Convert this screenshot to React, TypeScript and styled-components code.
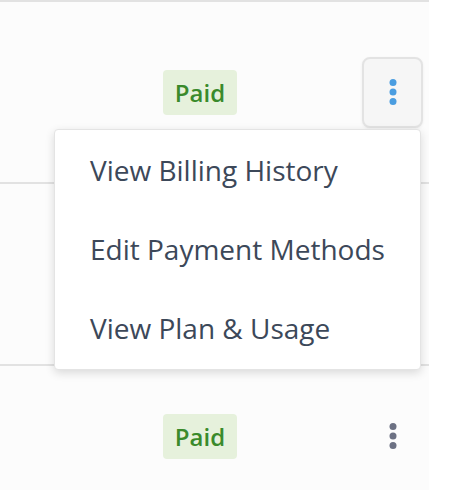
import React from "react";
import styled, { createGlobalStyle } from "styled-components";

const Global = createGlobalStyle`
  html, body { margin: 0; padding: 0; background: #ffffff; }
  body { font-family: "Open Sans", "Liberation Sans", sans-serif; }
`;

const Table = styled.div`
  width: 429px;
  height: 490px;
  background: #fcfcfc;
  border-top: 2px solid #e2e2e2;
  box-sizing: border-box;
  display: flex;
  flex-direction: column;
  overflow: hidden;
`;

const Row = styled.div<{ $height: number; $last?: boolean }>`
  position: relative;
  flex: 0 0 ${(p) => p.$height}px;
  display: flex;
  align-items: center;
  padding: 0 6px 0 163px;
  border-bottom: ${(p) => (p.$last ? "none" : "2px solid #e2e2e2")};
`;

const Badge = styled.span`
  display: inline-flex;
  align-items: center;
  justify-content: center;
  width: 74px;
  height: 45px;
  border-radius: 4px;
  background: #e6f1dc;
  color: #3a8a2b;
  font-size: 24px;
  font-weight: 600;
`;

const KebabButton = styled.button<{ $active?: boolean }>`
  margin-left: auto;
  width: 61px;
  height: 71px;
  display: flex;
  align-items: center;
  justify-content: center;
  border-radius: 8px;
  padding: 0;
  cursor: pointer;
  border: 2px solid ${(p) => (p.$active ? "#e3e3e3" : "transparent")};
  background: ${(p) => (p.$active ? "#f6f6f6" : "transparent")};
  box-shadow: ${(p) => (p.$active ? "0 1px 3px rgba(0,0,0,0.06)" : "none")};
  color: ${(p) => (p.$active ? "#4a9de0" : "#6c7183")};
`;

const Menu = styled.div`
  position: absolute;
  top: 127px;
  right: 8px;
  width: 367px;
  box-sizing: border-box;
  padding: 0 0 2px;
  background: #ffffff;
  border: 1px solid #e4e4e4;
  border-radius: 4px;
  box-shadow: 0 3px 10px rgba(0, 0, 0, 0.14);
  display: flex;
  flex-direction: column;
  z-index: 10;
`;

const MenuItem = styled.div`
  height: 79px;
  display: flex;
  align-items: center;
  padding-left: 35px;
  font-size: 28px;
  color: #3c4859;
  white-space: nowrap;
`;

const Dots = () => (
  <svg width="8" height="27" viewBox="0 0 8 27" fill="currentColor">
    <circle cx="4" cy="3.5" r="3.5" />
    <circle cx="4" cy="13" r="3.5" />
    <circle cx="4" cy="22.5" r="3.5" />
  </svg>
);

export default function App() {
  return (
    <>
      <Global />
      <Table>
        <Row $height={180}>
          <Badge>Paid</Badge>
          <KebabButton $active aria-label="More actions">
            <Dots />
          </KebabButton>
          <Menu>
            <MenuItem>View Billing History</MenuItem>
            <MenuItem>Edit Payment Methods</MenuItem>
            <MenuItem>View Plan &amp; Usage</MenuItem>
          </Menu>
        </Row>
        <Row $height={180} />
        <Row $height={140} $last>
          <Badge>Paid</Badge>
          <KebabButton aria-label="More actions">
            <Dots />
          </KebabButton>
        </Row>
      </Table>
    </>
  );
}
